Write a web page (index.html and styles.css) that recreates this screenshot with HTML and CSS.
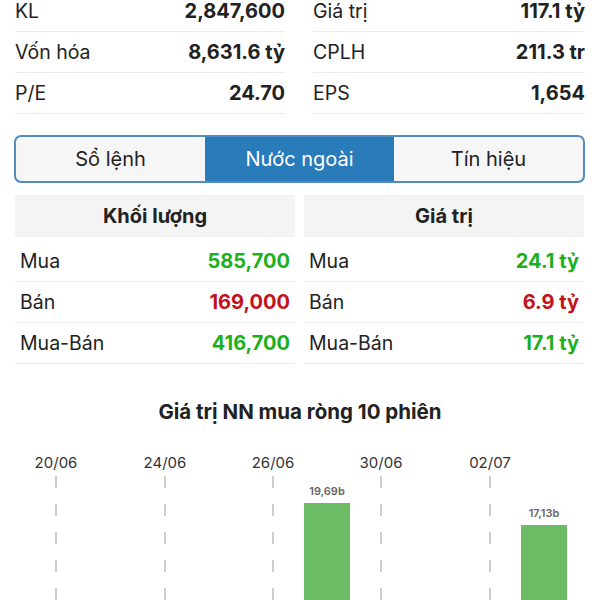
FILE: index.html
```html
<!DOCTYPE html>
<html lang="vi">
<head>
<meta charset="utf-8">
<link rel="stylesheet" href="styles.css">
</head>
<body>
<div class="stats">
  <div class="col">
    <div class="row"><span class="lbl">KL</span><span class="val">2,847,600</span></div>
    <div class="row"><span class="lbl">Vốn hóa</span><span class="val">8,631.6 tỷ</span></div>
    <div class="row"><span class="lbl">P/E</span><span class="val">24.70</span></div>
  </div>
  <div class="col">
    <div class="row"><span class="lbl">Giá trị</span><span class="val">117.1 tỷ</span></div>
    <div class="row"><span class="lbl">CPLH</span><span class="val">211.3 tr</span></div>
    <div class="row"><span class="lbl">EPS</span><span class="val">1,654</span></div>
  </div>
</div>

<div class="tabs">
  <div class="tab">Sổ lệnh</div>
  <div class="tab active">Nước ngoài</div>
  <div class="tab">Tín hiệu</div>
</div>

<div class="tables">
  <div class="tbl">
    <div class="thead">Khối lượng</div>
    <div class="tbody">
      <div class="trow"><span class="lbl">Mua</span><span class="num up">585,700</span></div>
      <div class="trow"><span class="lbl">Bán</span><span class="num down">169,000</span></div>
      <div class="trow"><span class="lbl">Mua-Bán</span><span class="num up">416,700</span></div>
    </div>
  </div>
  <div class="tbl">
    <div class="thead">Giá trị</div>
    <div class="tbody">
      <div class="trow"><span class="lbl">Mua</span><span class="num up">24.1 tỷ</span></div>
      <div class="trow"><span class="lbl">Bán</span><span class="num down">6.9 tỷ</span></div>
      <div class="trow"><span class="lbl">Mua-Bán</span><span class="num up">17.1 tỷ</span></div>
    </div>
  </div>
</div>

<div class="chart-title">Giá trị NN mua ròng 10 phiên</div>
<svg class="chart" width="600" height="170" viewBox="0 0 600 170">
  <g class="dates">
    <text x="56" y="37">20/06</text>
    <text x="165" y="37">24/06</text>
    <text x="273" y="37">26/06</text>
    <text x="381" y="37">30/06</text>
    <text x="490" y="37">02/07</text>
  </g>
  <g class="grid">
    <line x1="56" y1="45" x2="56" y2="170"/>
    <line x1="165" y1="45" x2="165" y2="170"/>
    <line x1="273" y1="45" x2="273" y2="170"/>
    <line x1="381" y1="45" x2="381" y2="170"/>
    <line x1="490" y1="45" x2="490" y2="170"/>
  </g>
  <rect class="bar" x="304" y="72" width="46" height="100"/>
  <rect class="bar" x="521" y="94" width="46" height="80"/>
  <g class="barlbl">
    <text x="327" y="64">19,69b</text>
    <text x="544" y="86">17,13b</text>
  </g>
</svg>
</body>
</html>
```
FILE: styles.css
```css
html, body {
  margin: 0;
  padding: 0;
  background: #fff;
  font-family: Inter, "Liberation Sans", Arial, sans-serif;
  color: #222;
  overflow: hidden;
}

.stats {
  display: grid;
  grid-template-columns: 270px 272px;
  column-gap: 28px;
  margin: -9px 15px 0 15px;
}

.row {
  display: flex;
  justify-content: space-between;
  align-items: center;
  height: 40px;
  border-bottom: 1px solid #ececec;
  font-size: 19.5px;
}

.val {
  font-weight: bold;
  font-size: 20px;
}

.tabs {
  display: grid;
  grid-template-columns: 1fr 1fr 1fr;
  margin: 21px 15px 0 14px;
  height: 44px;
  border: 2px solid #4f8cc0;
  border-radius: 7px;
  overflow: hidden;
  background: #f6f6f6;
}

.tab {
  display: flex;
  align-items: center;
  justify-content: center;
  font-size: 20px;
  color: #222;
}

.tab.active {
  background: #2a7bba;
  color: #fff;
}

.tables {
  display: grid;
  grid-template-columns: 280px 280px;
  column-gap: 9px;
  margin: 12px 0 0 15px;
}

.thead {
  height: 42px;
  display: flex;
  align-items: center;
  justify-content: center;
  background: #f4f4f4;
  font-weight: bold;
  font-size: 20px;
  color: #222;
}

.tbody {
  padding-top: 4px;
}

.trow {
  display: flex;
  justify-content: space-between;
  align-items: center;
  height: 40px;
  padding: 0 5px;
  border-bottom: 1px solid #ececec;
  font-size: 19.5px;
}

.num {
  font-weight: bold;
  font-size: 20px;
}

.up {
  color: #1cb01c;
}

.down {
  color: #c2121c;
}

.chart-title {
  margin-top: 35px;
  text-align: center;
  font-weight: bold;
  font-size: 20.5px;
  line-height: 26px;
  color: #222;
}

.chart {
  display: block;
  margin-top: 6px;
}

.dates text {
  font-family: Inter, "Liberation Sans", Arial, sans-serif;
  font-size: 15px;
  fill: #333;
  text-anchor: middle;
}

.grid line {
  stroke: #bdbdbd;
  stroke-width: 1.5;
  stroke-dasharray: 12 16;
}

.bar {
  fill: #6cbb65;
}

.barlbl text {
  font-family: Inter, "Liberation Sans", Arial, sans-serif;
  font-size: 11px;
  font-weight: 600;
  fill: #666;
  text-anchor: middle;
}
```
